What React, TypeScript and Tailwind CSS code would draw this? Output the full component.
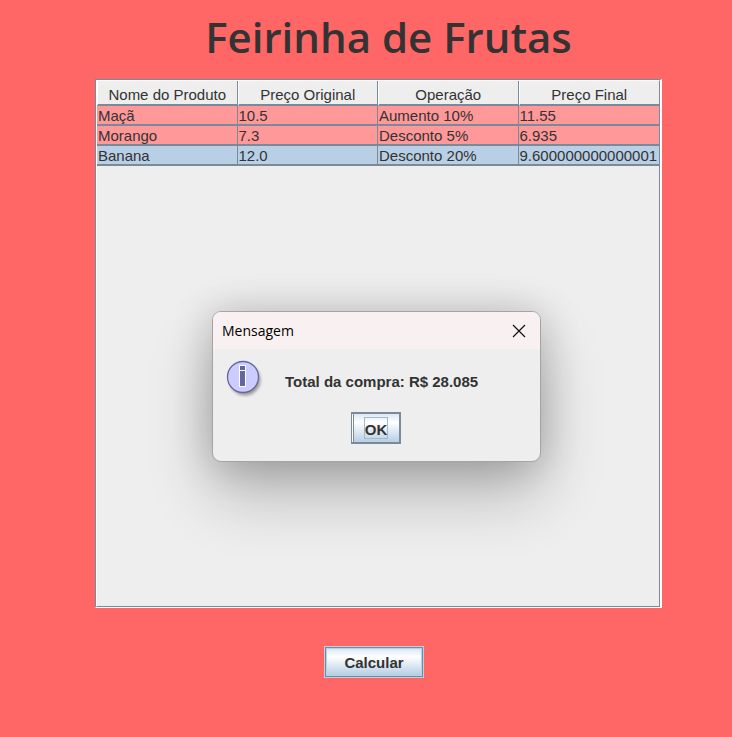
import { useState } from "react";

const columns = ["Nome do Produto", "Preço Original", "Operação", "Preço Final"];

const products = [
  { name: "Maçã", price: "10.5", operation: "Aumento 10%", final: "11.55" },
  { name: "Morango", price: "7.3", operation: "Desconto 5%", final: "6.935" },
  { name: "Banana", price: "12.0", operation: "Desconto 20%", final: "9.600000000000001" },
];

function InfoIcon() {
  return (
    <svg width="40" height="40" viewBox="0 0 40 40" aria-hidden="true">
      <defs>
        <filter id="iconShadow" x="-20%" y="-20%" width="150%" height="150%">
          <feGaussianBlur stdDeviation="1.6" />
        </filter>
      </defs>
      <circle cx="19" cy="20" r="15.5" fill="#000" opacity="0.35" filter="url(#iconShadow)" />
      <circle cx="17" cy="17" r="15.5" fill="#ccccff" stroke="#666699" strokeWidth="1.3" />
      <path d="M13 5h7v22h-7z" fill="#fff" />
      <path d="M14 6h5v4h-5zM14 11h5v15h-5z" fill="#666699" />
    </svg>
  );
}

function MessageDialog({ onClose }: { onClose: () => void }) {
  return (
    <div
      role="dialog"
      aria-labelledby="dialog-title"
      className="absolute left-[212px] top-[311px] w-[329px] overflow-hidden rounded-[9px] border border-[#a6a3a4] bg-[#eeeeee] shadow-[0_32px_64px_rgba(0,0,0,0.24),0_2px_40px_rgba(0,0,0,0.2)]"
    >
      <div className="flex h-[37px] items-center justify-between bg-[#f9f0f1] pl-[9px] pr-[14px]">
        <h2 id="dialog-title" className="font-['Open_Sans',sans-serif] text-sm text-black">
          Mensagem
        </h2>
        <button type="button" aria-label="Fechar" onClick={onClose}>
          <svg width="14" height="14" viewBox="0 0 14 14" aria-hidden="true">
            <path d="M1 1l12 12M13 1L1 13" stroke="#111" strokeWidth="1.2" />
          </svg>
        </button>
      </div>
      <div className="flex gap-[19px] pl-[13px] pt-[11px]">
        <InfoIcon />
        <p className="pt-3 text-[15px] leading-5 font-bold whitespace-nowrap">Total da compra: R$ 28.085</p>
      </div>
      <div className="flex justify-center pr-0.5 pb-[17px] pt-3">
        <button
          type="button"
          onClick={onClose}
          className="h-8 w-[50px] border-2 border-l border-[#7a8a99] bg-white pl-px text-[15px] font-bold"
        >
          <span className="flex h-full items-center justify-center border-l border-[#7a8a99] bg-linear-to-b from-[#dde8f3] via-white via-30% to-[#b8cfe5]">
            <span className="h-[22px] border border-[#a3b8cc] pt-0.5 leading-5">OK</span>
          </span>
        </button>
      </div>
    </div>
  );
}

export default function App() {
  const [open, setOpen] = useState(true);

  return (
    <main className="relative min-h-screen bg-[#ff6666] font-['Liberation_Sans',Arial,sans-serif] text-[#333333]">
      <h1 className="pl-[45px] pt-2 text-center font-['Open_Sans',sans-serif] text-[42px] leading-[58px] font-semibold">
        Feirinha de Frutas
      </h1>
      <div className="ml-[95px] mr-[70px] mt-[13px] border border-r-2 border-l-[#7a8a99] border-t-[#7a8a99] border-b-white border-r-white">
        <div className="min-h-[527px] border border-b-[#7a8a99] border-r-[#7a8a99] border-l-white border-t-white bg-[#eeeeee]">
          <table className="w-full table-fixed border-separate border-spacing-0 text-[15px]">
            <thead>
              <tr>
                {columns.map((column) => (
                  <th
                    key={column}
                    scope="col"
                    className="h-[25px] border-r border-b-2 border-l border-[#7a8a99] border-l-white p-0 pt-1 leading-[19px] font-normal last:border-r-0"
                  >
                    {column}
                  </th>
                ))}
              </tr>
            </thead>
            <tbody>
              {products.map((product) => (
                <tr key={product.name} className="bg-[#ff9999] last:bg-[#b8cfe5]">
                  {Object.entries(product).map(([field, value]) => (
                    <td
                      key={field}
                      className="h-5 border-r border-b-2 border-[#7a8a99] pb-0 pl-px pr-0 pt-0.5 leading-4 last:border-r-0"
                    >
                      {value}
                    </td>
                  ))}
                </tr>
              ))}
            </tbody>
          </table>
        </div>
      </div>
      <div className="flex justify-center pb-[59px] pl-4 pt-[38px]">
        <button
          type="button"
          onClick={() => setOpen(true)}
          className="h-8 w-[100px] border border-[#b8cfe5] text-[15px] font-bold"
        >
          <span className="block h-full border border-[#7a8a99]">
            <span className="block h-full border border-[#b8cfe5] bg-linear-to-b from-[#dde8f3] via-white via-30% to-[#b8cfe5] leading-7">
              Calcular
            </span>
          </span>
        </button>
      </div>
      {open && <MessageDialog onClose={() => setOpen(false)} />}
    </main>
  );
}
